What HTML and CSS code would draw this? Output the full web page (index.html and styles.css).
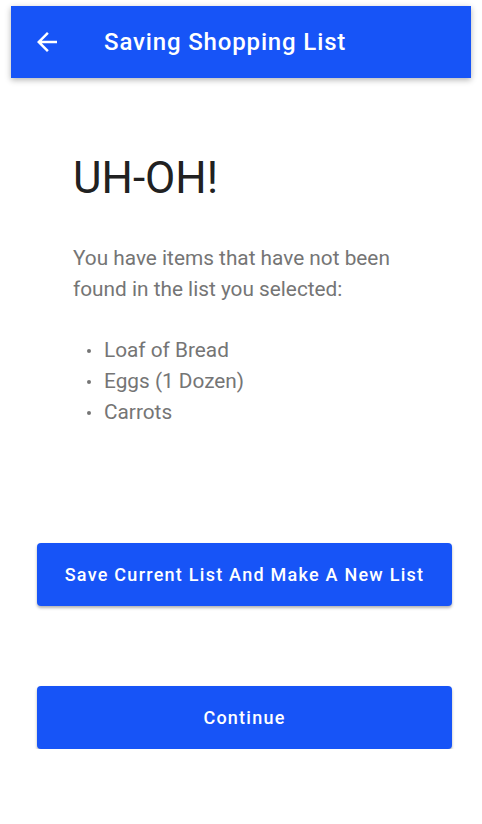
FILE: index.html
```html
<!DOCTYPE html>
<html>
<head>
<meta charset="utf-8">
<link rel="stylesheet" href="styles.css">
</head>
<body>
<div class="app">
  <header class="topbar">
    <svg class="back" viewBox="0 0 24 24" width="30" height="30"><path d="M20 11H7.83l5.59-5.59L12 4l-8 8 8 8 1.41-1.41L7.83 13H20v-2z" fill="#fff"/></svg>
    <h1 class="title">Saving Shopping List</h1>
  </header>
  <main class="content">
    <h2 class="headline">UH-OH!</h2>
    <p class="message">You have items that have not been found in the list you selected:</p>
    <ul class="items">
      <li>Loaf of Bread</li>
      <li>Eggs (1 Dozen)</li>
      <li>Carrots</li>
    </ul>
  </main>
  <div class="actions">
    <button class="btn">Save Current List And Make A New List</button>
    <button class="btn">Continue</button>
  </div>
</div>
</body>
</html>
```
FILE: styles.css
```css
* { box-sizing: border-box; }
html, body { margin: 0; padding: 0; background: #fff; }
body { font-family: Roboto, "Liberation Sans", sans-serif; }
.app { margin: 6px 11px 0 11px; width: 460px; }
.topbar {
  height: 72px;
  background: #1754f7;
  display: flex;
  align-items: center;
  padding-left: 21px;
  box-shadow: 0 2px 6px rgba(0,0,0,0.3);
}
.back { display: block; width: 30px; height: 30px; }
.title {
  margin: 0 0 0 42px;
  color: #fff;
  font-size: 24px;
  font-weight: 500;
  letter-spacing: 0.85px;
}
.content { padding: 74px 30px 0 62px; }
.headline {
  margin: 0;
  font-size: 44px;
  font-weight: 400;
  color: #212121;
  line-height: 52px;
}
.message {
  margin: 39px 0 0 0;
  font-size: 20.8px;
  line-height: 31px;
  color: #757575;
  width: 340px;
}
.items {
  margin: 30px 0 0 0;
  padding: 0 0 0 31px;
  list-style: none;
  font-size: 20.8px;
  line-height: 31px;
  color: #757575;
}
.items li { position: relative; }
.items li::before {
  content: "";
  position: absolute;
  left: -17px;
  top: 14px;
  width: 4px;
  height: 4px;
  border-radius: 50%;
  background: #757575;
}
.actions {
  padding: 115px 0 0 26px;
  display: flex;
  flex-direction: column;
  gap: 80px;
}
.btn {
  width: 415px;
  height: 63px;
  border: none;
  border-radius: 4px;
  background: #1754f7;
  color: #fff;
  font-family: Roboto, "Liberation Sans", sans-serif;
  font-size: 18px;
  font-weight: 500;
  letter-spacing: 1.25px;
  box-shadow: 0 2px 3px rgba(0,0,0,0.3);
}
```
